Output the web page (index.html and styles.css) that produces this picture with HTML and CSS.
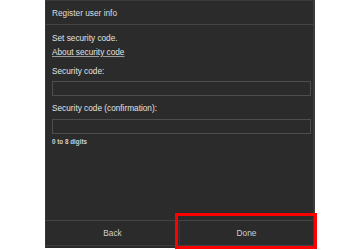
FILE: index.html
```html
<!DOCTYPE html>
<html>
<head>
<meta charset="utf-8">
<link rel="stylesheet" href="styles.css">
</head>
<body>
<div class="stage">
  <div class="panel">
    <div class="header">Register user info</div>
    <div class="content">
      <div class="line">Set security code.</div>
      <div class="line link"><span>About security code</span></div>
      <div class="line label">Security code:</div>
      <div class="field"></div>
      <div class="line label2">Security code (confirmation):</div>
      <div class="field field2"></div>
      <div class="hint">0 to 8 digits</div>
    </div>
    <div class="footer">
      <div class="btn">Back</div>
      <div class="btn btn-done">Done</div>
    </div>
  </div>
  <div class="highlight"></div>
</div>
</body>
</html>
```
FILE: styles.css
```css
html, body {
  margin: 0;
  padding: 0;
  background: #ffffff;
}
body {
  font-family: "Liberation Sans", Arial, sans-serif;
  width: 364px;
  height: 250px;
  overflow: hidden;
}
.stage {
  position: relative;
  width: 364px;
  height: 250px;
}
.panel {
  margin-left: 45px;
  width: 270px;
  height: 248px;
  box-sizing: border-box;
  background: #2b2b2b;
  border-left: 1px solid #363636;
  border-right: 2px solid #3b3b3b;
  border-top: 1px solid #3a3a3a;
  display: flex;
  flex-direction: column;
}
.header {
  height: 23px;
  border-bottom: 1px solid #454545;
  box-sizing: content-box;
  padding-left: 6px;
  display: flex;
  align-items: center;
  color: #dedede;
  font-size: 8.3px;
}
.content {
  flex: 1;
  padding: 8px 2px 0 6px;
  color: #e2e2e2;
  font-size: 8.25px;
}
.line {
  height: 12px;
  line-height: 12px;
  margin-bottom: 2px;
}
.link span {
  text-decoration: underline;
  text-decoration-color: #9a9a9a;
  text-underline-offset: 1px;
}
.link {
  margin-bottom: 7px;
}
.label {
  margin-bottom: 3px;
}
.field {
  width: 259px;
  height: 15px;
  box-sizing: border-box;
  border: 1px solid #4d4d4d;
  background: #2b2b2b;
  margin-bottom: 7px;
}
.label2 {
  margin-bottom: 4px;
}
.field2 {
  margin-bottom: 4px;
}
.hint {
  font-size: 6.3px;
  line-height: 8px;
  height: 8px;
  color: #d0d0d0;
  font-weight: bold;
}
.footer {
  height: 24px;
  border-top: 1px solid #444444;
  border-bottom: 1px solid #3e3e3e;
  margin-bottom: 2px;
  display: flex;
  color: #cfcfcf;
  font-size: 8.3px;
}
.btn {
  flex: 1;
  display: flex;
  align-items: center;
  justify-content: center;
}
.btn-done {
  border-left: 1px solid #3a3a3a;
}
.highlight {
  position: absolute;
  left: 175px;
  top: 213px;
  width: 142px;
  height: 36px;
  box-sizing: border-box;
  border: 3px solid #ff0000;
}
```
